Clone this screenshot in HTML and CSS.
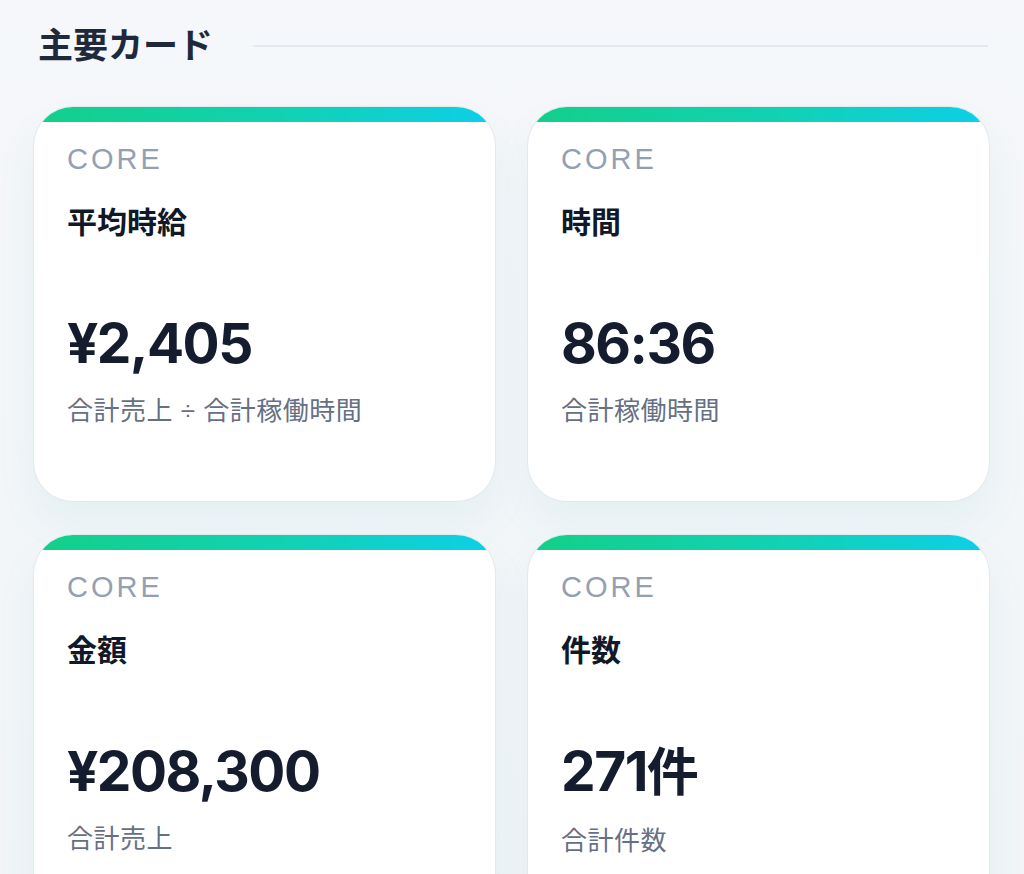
FILE: index.html
```html
<!DOCTYPE html>
<html lang="ja">
<head>
    <meta charset="UTF-8">
    <meta name="viewport" content="width=device-width, initial-scale=1.0">
    <title>主要カード</title>
    <link rel="stylesheet" href="styles.css">
</head>
<body>
    <div class="page">
        <div class="section-head">
            <h2>主要カード</h2>
            <div class="section-line"></div>
        </div>

        <div class="card-grid">
            <div class="card">
                <div class="card-bar"></div>
                <div class="card-body">
                    <div class="card-tag">CORE</div>
                    <div class="card-title">平均時給</div>
                    <div class="card-value">¥2,405</div>
                    <div class="card-sub">合計売上 ÷ 合計稼働時間</div>
                </div>
            </div>
            <div class="card">
                <div class="card-bar"></div>
                <div class="card-body">
                    <div class="card-tag">CORE</div>
                    <div class="card-title">時間</div>
                    <div class="card-value">86:36</div>
                    <div class="card-sub">合計稼働時間</div>
                </div>
            </div>
            <div class="card">
                <div class="card-bar"></div>
                <div class="card-body">
                    <div class="card-tag">CORE</div>
                    <div class="card-title">金額</div>
                    <div class="card-value">¥208,300</div>
                    <div class="card-sub">合計売上</div>
                </div>
            </div>
            <div class="card">
                <div class="card-bar"></div>
                <div class="card-body">
                    <div class="card-tag">CORE</div>
                    <div class="card-title">件数</div>
                    <div class="card-value">271<span class="unit">件</span></div>
                    <div class="card-sub">合計件数</div>
                </div>
            </div>
        </div>
    </div>
</body>
</html>
```

FILE: styles.css
```css
* {
    margin: 0;
    padding: 0;
    box-sizing: border-box;
}

body {
    background: linear-gradient(180deg, #f5f7fa 0%, #f1f5f8 100%);
    font-family: "Liberation Sans", "Noto Sans CJK JP", sans-serif;
    color: #0f172a;
    min-height: 874px;
}

.page {
    padding: 26px 34px 0 33px;
}

.section-head {
    display: flex;
    align-items: center;
    gap: 40px;
    padding-left: 5px;
    margin-bottom: 40px;
}

.section-head h2 {
    font-size: 35px;
    line-height: 40px;
    font-weight: 700;
    color: #1e293b;
}

.section-line {
    flex: 1;
    height: 2px;
    background-color: #e4e9ef;
    margin-right: 2px;
}

.card-grid {
    display: grid;
    grid-template-columns: 1fr 1fr;
    column-gap: 31px;
    row-gap: 32px;
}

.card {
    background-color: #fff;
    border: 1px solid #e3e8ee;
    border-radius: 40px;
    overflow: hidden;
    box-shadow: 0 22px 40px rgba(40, 160, 140, 0.07);
}

.card-bar {
    height: 15px;
    background: linear-gradient(90deg, #14cf88 0%, #10d2b4 55%, #0dcfe8 100%);
}

.card-body {
    padding: 20px 33px 73px;
}

.card-tag {
    font-size: 29px;
    line-height: 34px;
    font-weight: 400;
    letter-spacing: 3px;
    color: #94a0b2;
}

.card-title {
    margin-top: 27px;
    font-size: 30px;
    line-height: 40px;
    font-weight: 700;
    color: #111827;
}

.card-value {
    margin-top: 68px;
    font-family: Inter, "Noto Sans CJK JP", sans-serif;
    font-size: 55px;
    line-height: 64px;
    font-weight: 700;
    letter-spacing: -1.5px;
    color: #141c2e;
}

.card-value .unit {
    font-size: 52px;
}

.card-sub {
    margin-top: 19px;
    font-size: 26px;
    line-height: 34px;
    letter-spacing: 0.5px;
    color: #667085;
}
```
